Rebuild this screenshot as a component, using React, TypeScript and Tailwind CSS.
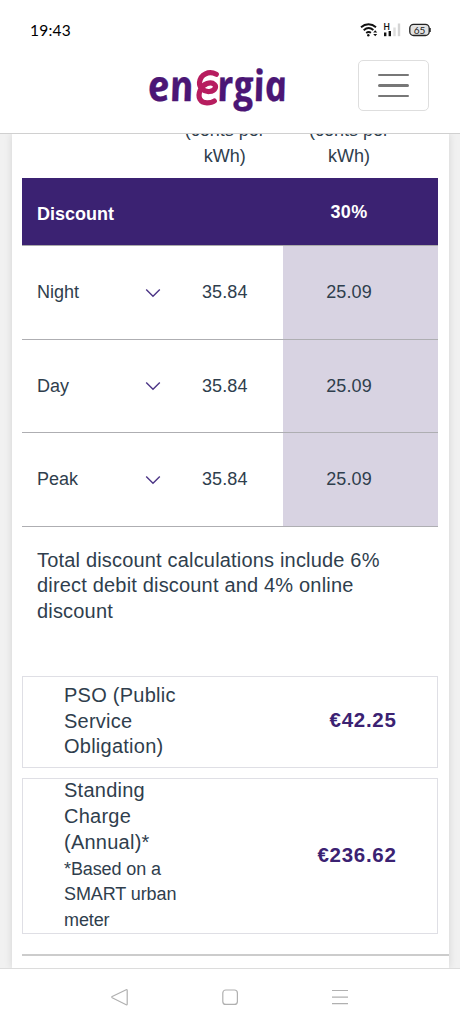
import type { ReactNode } from "react";

const rates = [
  { period: "Night", standard: "35.84", discounted: "25.09" },
  { period: "Day", standard: "35.84", discounted: "25.09" },
  { period: "Peak", standard: "35.84", discounted: "25.09" },
];

function StatusBar() {
  return (
    <div className="flex h-[60px] items-center justify-between pr-[29px] pl-[30px]">
      <span className="pt-0.5 font-[Lato,sans-serif] text-[15.5px] tracking-[0.2px] text-black">19:43</span>
      <div className="flex items-center">
        {/* Wifi */}
        <svg width="18" height="14" viewBox="0 0 18 14" fill="none" stroke="#111" strokeWidth="1.9">
          <path d="M1 4.2C5.5 .2 11.5 .2 16 4.2" />
          <path d="M3.7 7.2c3-2.6 6.8-2.6 9.7-.2" />
          <path d="M6.2 10c1.6-1.2 3.2-1.2 4.8-.2" />
          <circle cx="8.3" cy="12.2" r="1.2" fill="#111" stroke="none" />
          <path d="M13.2 9.5L15.2 7.2l2 2.3zM13.2 11l2 2.3 2-2.3z" fill="#111" stroke="none" />
        </svg>
        {/* Mobile signal */}
        <svg className="ml-[5px] overflow-visible" width="18" height="14" viewBox="0 0 18 14">
          <text x="0.5" y="7" fontSize="9" fontWeight="500" fontFamily="Roboto, sans-serif" fill="#111">H</text>
          <rect x="1" y="9.5" width="2.4" height="3.7" fill="#111" />
          <rect x="5.6" y="8" width="2.4" height="5.2" fill="#111" />
          <rect x="10.3" y="4.5" width="2.4" height="8.7" fill="#ddd" />
          <rect x="14.8" y="0.5" width="2.4" height="12.7" fill="#d4d4d4" />
        </svg>
        <svg className="ml-[8px]" width="22" height="14" viewBox="0 0 22 14">
          <rect x="0.8" y="1.3" width="19.4" height="11.2" rx="3.8" fill="#e2e2e2" stroke="#222" strokeWidth="1.3" />
          <path d="M21 5v4" stroke="#222" strokeWidth="1.5" />
          <text x="10.5" y="10.5" textAnchor="middle" fontSize="10" fontFamily="Lato, sans-serif" fill="#222">65</text>
        </svg>
      </div>
    </div>
  );
}

function Logo() {
  return (
    <svg
      className="overflow-visible"
      width="144"
      height="56"
      viewBox="0 0 144 56"
      fontFamily="'Open Sans', sans-serif"
      fontWeight="700"
      fontStyle="italic"
      fontSize="43"
      fill="#4b1675"
      stroke="#4b1675"
      strokeWidth="0.3"
      strokeLinejoin="round"
    >
      <g transform="translate(0 37) skewX(9)">
        <text x="2.5" y="0" textLength="46" lengthAdjust="spacingAndGlyphs">en</text>
        <text x="72" y="0" textLength="70" lengthAdjust="spacingAndGlyphs">rgia</text>
      </g>
      {/* Ribbon in the middle of the wordmark */}
      <path
        d="M69.3 10.3C62 6.5 53.5 10 52.5 18.5C52.2 24 57 28 62.5 27.5C68.5 27 69.5 22.5 67.5 20.5C64 17 56 19.5 53.3 26C50 33.5 53.5 38.7 60 38.8C64 38.8 66 38 67.3 37"
        fill="none"
        stroke="#b71d5f"
        strokeWidth="5.2"
        strokeLinecap="round"
      />
    </svg>
  );
}

function Header() {
  return (
    <header className="h-[134px] shrink-0 border-b border-[#d0d0d0] bg-white">
      <StatusBar />
      <div className="flex items-start justify-end pr-[31px]">
        <div className="mt-1 mr-[67px]">
          <Logo />
        </div>
        <button className="flex h-[51px] w-[71px] flex-col items-center justify-center gap-2 rounded-[5px] border border-[#dedede]">
          <span className="h-[2.3px] w-[31px] rounded bg-[#777]" />
          <span className="h-[2.3px] w-[31px] rounded bg-[#777]" />
          <span className="h-[2.3px] w-[31px] rounded bg-[#777]" />
        </button>
      </div>
    </header>
  );
}

function Chevron() {
  return (
    <svg width="16" height="10" viewBox="0 0 16 10" fill="none" stroke="#4c3586" strokeWidth="1.4">
      <path d="M1.2 1.5L8 8.2 14.8 1.5" />
    </svg>
  );
}

function ChargeBox({ amount, className, children }: { amount: string; className: string; children: ReactNode }) {
  return (
    <div className={`mr-[11px] ml-[10px] flex items-center justify-between border border-[#dfdfe5] pr-[40px] pl-[41.5px] ${className}`}>
      <div className="text-[20px] leading-[25.7px] tracking-[0.25px] whitespace-nowrap">{children}</div>
      <div className="pb-0.5 text-[20.5px] font-bold tracking-[0.7px] text-[#3b2272]">{amount}</div>
    </div>
  );
}

function NavBar() {
  return (
    <nav className="flex h-[56px] shrink-0 items-center justify-center border-t border-[#dcdcdc] bg-white">
      <svg width="238" height="18" viewBox="0 0 238 18" fill="none" stroke="#b0b0b0" strokeWidth="1.2">
        <path d="M15.2 1.7L1.2 8.5q-1 .6 0 1.2l14 7q1 .4 1-.7V2.4q0-1-1-.7z" />
        <rect x="111.8" y="2" width="14.6" height="14.4" rx="3" />
        <path d="M221 2.5h16M221 9.2h16M221 15.7h16" />
      </svg>
    </nav>
  );
}

export default function App() {
  return (
    <div className="flex h-[1024px] w-[460px] flex-col overflow-hidden bg-white font-['Liberation_Sans',Arial,sans-serif] text-[#2f3e4d]">
      <Header />
      <main className="min-h-0 flex-1 overflow-hidden bg-[#f1f1f1] px-[11.5px]">
        <div className="flow-root h-full bg-white shadow-[0_0_8px_rgba(0,0,0,0.12)]">
          {/* Column headings, partly scrolled under the header */}
          <div className="ml-[10px] grid h-[44px] w-[416.5px] grid-cols-[145px_116.5px_155px] content-end overflow-hidden pb-[9px] text-center text-[18px] leading-[26px]">
            <span />
            <span>(cents per<br />kWh)</span>
            <span className="pr-[23px]">(cents per<br />kWh)</span>
          </div>
          <div className="ml-[10px] grid h-[68px] w-[416.5px] grid-cols-[145px_116.5px_155px] items-center border-b border-[#aaa] bg-[#3b2272] text-[18px] font-bold text-white">
            <span className="pt-[5px] pl-[15.5px]">Discount</span>
            <span />
            <span className="pt-px pr-[23px] text-center tracking-[0.4px]">30%</span>
          </div>
          {rates.map((rate) => (
            <div
              key={rate.period}
              className="ml-[10px] grid h-[93.5px] w-[416.5px] grid-cols-[145px_116.5px_155px] border-b border-[#aeaeb2] text-[18px]"
            >
              <div className="flex items-center justify-between pt-px pr-[6px] pl-[15.5px]">
                <span>{rate.period}</span>
                <Chevron />
              </div>
              <div className="flex items-center justify-center pt-px tracking-[0.1px]">{rate.standard}</div>
              <div className="flex items-center justify-center bg-[#d8d3e2] pt-px pr-[23px] tracking-[0.1px]">{rate.discounted}</div>
            </div>
          ))}
          <p className="mt-[21px] ml-[25.5px] h-[128px] text-[20px] leading-[25.7px] tracking-[0.18px] whitespace-nowrap">
            Total discount calculations include 6%
            <br />
            direct debit discount and 4% online
            <br />
            discount
          </p>
          <ChargeBox amount="€42.25" className="h-[92px]">
            PSO (Public<br />Service<br />Obligation)
          </ChargeBox>
          <ChargeBox amount="€236.62" className="mt-[10.5px] h-[156px]">
            Standing<br />Charge<br />(Annual)*
            <div className="pt-px text-[18px] tracking-[-0.1px]">*Based on a<br />SMART urban<br />meter</div>
          </ChargeBox>
          <div className="mt-5 ml-[10px] border-t-2 border-[#ccc]" />
        </div>
      </main>
      <NavBar />
    </div>
  );
}
